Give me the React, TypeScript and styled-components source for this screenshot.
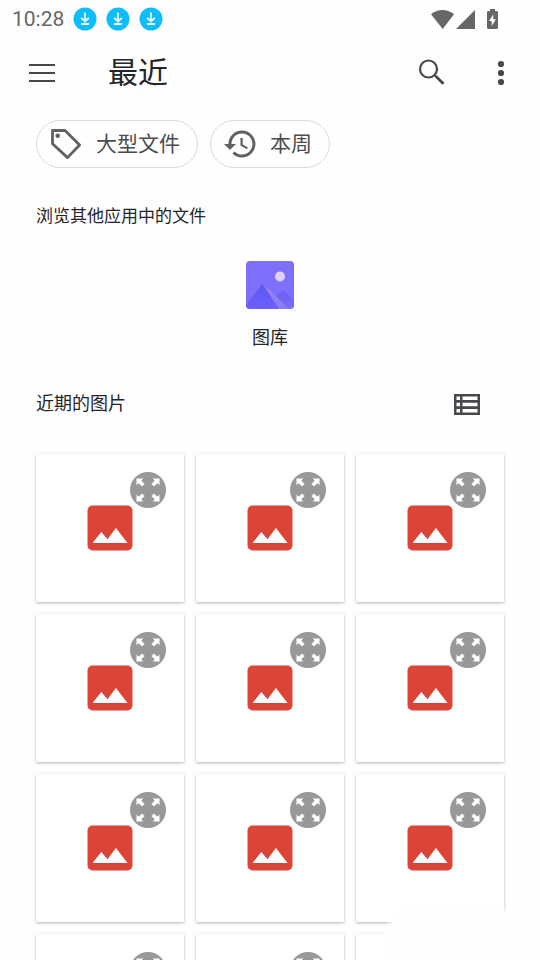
import React from "react";
import styled, { createGlobalStyle } from "styled-components";

const GlobalStyle = createGlobalStyle`
  *, *::before, *::after { box-sizing: border-box; }
  html, body { margin: 0; background: #fefefe; }
  body {
    font-family: Roboto, "Noto Sans CJK SC", sans-serif;
    color: #242528;
  }
  button { font: inherit; color: inherit; border: 0; padding: 0; background: none; cursor: pointer; }
  h1, h2, p { margin: 0; font-weight: 400; }
  svg { display: block; flex: none; }
`;

const Screen = styled.div`
  position: relative;
  height: 100vh;
  overflow: hidden;
  background: #fefefe;
`;

const StatusBar = styled.div`
  display: flex;
  align-items: center;
  height: 37px;
  padding: 0 41px 0 12px;
  color: #666666;
`;

const Clock = styled.time`
  font-size: 21px;
  line-height: 24px;
  margin-right: 9px;
`;

const Notifications = styled.div`
  display: flex;
  gap: 9px;
`;

const SystemIcons = styled.div`
  display: flex;
  align-items: center;
  margin-left: auto;
`;

const AppBar = styled.header`
  display: flex;
  align-items: center;
  height: 71px;
  padding: 0 15px 0 18px;
  color: #46484c;
`;

const IconButton = styled.button`
  display: grid;
  place-items: center;
  width: 48px;
  height: 48px;
`;

const Title = styled.h1`
  flex: 1;
  margin-left: 42px;
  font-size: 30px;
  line-height: 44px;
  color: #242528;
`;

const BarActions = styled.div`
  display: flex;
  gap: 21px;
`;

const Chips = styled.div`
  display: flex;
  gap: 12px;
  padding: 12px 36px 0;
`;

const Chip = styled.button`
  && {
    display: flex;
    align-items: center;
    gap: 15px;
    height: 48px;
    padding: 0 17px 0 14px;
    border: 1px solid #dadada;
    border-radius: 24px;
    font-size: 21px;
    line-height: 30px;
    color: #4a4c50;
  }
  svg { color: #5f6165; overflow: visible; }
`;

const SectionTitle = styled.h2<{ $size: number }>`
  font-size: ${(p) => p.$size}px;
  line-height: 24px;
`;

const AppsSection = styled.section`
  padding: 36px 36px 0;
`;

const AppList = styled.div`
  display: flex;
  justify-content: center;
  padding-top: 33px;
`;

const AppLink = styled.button`
  display: flex;
  flex-direction: column;
  align-items: center;
  gap: 17px;
  font-size: 18px;
  line-height: 24px;
`;

const RecentSection = styled.section`
  padding: 30px 36px 0;
`;

const SectionHeader = styled.div`
  display: flex;
  align-items: center;
  justify-content: space-between;
  height: 48px;
  padding-right: 13px;
`;

const ViewButton = styled(IconButton)`
  && { color: #46484c; }
`;

const Grid = styled.div`
  display: grid;
  grid-template-columns: repeat(3, 1fr);
  gap: 12px;
  padding-top: 26px;
`;

const Card = styled.article`
  position: relative;
  display: grid;
  place-items: center;
  aspect-ratio: 1;
  background: #ffffff;
  border-radius: 1px;
  box-shadow: 0 1px 3px rgba(0, 0, 0, 0.3);
`;

const ExpandButton = styled.button`
  && {
    position: absolute;
    top: 18px;
    right: 18px;
    display: grid;
    place-items: center;
    width: 36px;
    height: 36px;
    border-radius: 50%;
    background: #989898;
    color: #ffffff;
  }
`;

const CornerFade = styled.div`
  position: absolute;
  right: 20px;
  bottom: -12px;
  width: 130px;
  height: 58px;
  border-radius: 20px 0 0 0;
  background: #fefefe;
  box-shadow: 0 0 6px 3px #fefefe;
`;

const DownloadIcon = () => (
  <svg width="24" height="24" viewBox="0 0 24 24" aria-hidden="true">
    <circle cx="12" cy="12" r="11.5" fill="#10bdfc" />
    <path d="M12 5.5v8.5M8.2 10.8l3.8 3.6 3.8-3.6M8 17h8" fill="none" stroke="#e9faff" strokeWidth="1.8" />
  </svg>
);

const StatusIcons = () => (
  <svg width="68" height="20" viewBox="0 0 68 20" fill="currentColor" aria-hidden="true">
    <path d="M0 5.2Q11.5-3.2 23 5.2L11.7 20z" />
    <path d="M25 20L44 1v19z" />
    <path fillRule="evenodd" d="M59 0h5v2h1.6c.8 0 1.4.6 1.4 1.4v15.2c0 .8-.6 1.4-1.4 1.4h-8.2c-.8 0-1.4-.6-1.4-1.4V3.4c0-.8.6-1.4 1.4-1.4H59zM62.3 5.500l-4.300 6.500h2.700v5l4.200-6.800h-2.600z" />
  </svg>
);

const MenuIcon = () => (
  <svg width="28" height="20" viewBox="0 0 28 20" aria-hidden="true">
    <path d="M1 2h26M1 10h26M1 18h26" stroke="currentColor" strokeWidth="2.200" />
  </svg>
);

const SearchIcon = () => (
  <svg width="28" height="28" viewBox="0 0 28 28" fill="none" stroke="currentColor" aria-hidden="true">
    <circle cx="10.500" cy="10" r="8.500" strokeWidth="2.200" />
    <path d="M16.500 16l2 2" strokeWidth="2" />
    <path d="M18 17.500l7.500 7.300" strokeWidth="2.800" />
  </svg>
);

const MoreIcon = () => (
  <svg width="8" height="26" viewBox="0 0 8 26" fill="currentColor" aria-hidden="true">
    <circle cx="4" cy="4" r="3.100" />
    <circle cx="4" cy="13" r="3.100" />
    <circle cx="4" cy="22" r="3.100" />
  </svg>
);

const TagIcon = () => (
  <svg width="30" height="30" viewBox="0 0 30 30" aria-hidden="true">
    <path d="M1.500 1.500H14L28.600 16 16.500 28.600 1.500 14.800z" fill="none" stroke="currentColor" strokeWidth="2.800" strokeLinejoin="round" />
    <circle cx="6.700" cy="6.700" r="2.300" fill="currentColor" />
  </svg>
);

const HistoryIcon = () => (
  <svg width="30" height="30" viewBox="1.700 2 20 20" fill="currentColor" aria-hidden="true">
    <path d="M13 3c-4.970 0-9 4.030-9 9H1l3.890 3.890.07.14L9 12H6c0-3.870 3.130-7 7-7s7 3.130 7 7-3.130 7-7 7c-1.930 0-3.680-.79-4.940-2.060l-1.420 1.420C8.270 19.990 10.510 21 13 21c4.970 0 9-4.030 9-9s-4.030-9-9-9zm-1 5v5l4.280 2.540.72-1.210-3.500-2.080V8H12z" />
  </svg>
);

const GalleryIcon = () => (
  <svg width="48" height="48" viewBox="0 0 48 48" aria-hidden="true">
    <defs>
      <clipPath id="gallery-shape">
        <rect width="48" height="48" rx="4" />
      </clipPath>
      <linearGradient id="gallery-peak" x1="0" y1="0" x2="0" y2="1">
        <stop offset="0" stopColor="#5e58ee" />
        <stop offset="1" stopColor="#6c60ff" />
      </linearGradient>
      <linearGradient id="gallery-side" x1="0" y1="0" x2="1" y2="1">
        <stop offset="0" stopColor="#a58be8" />
        <stop offset="1" stopColor="#8577f8" />
      </linearGradient>
      <linearGradient id="gallery-back" x1="0" y1="0" x2="0" y2="1">
        <stop offset="0" stopColor="#6b5cf1" />
        <stop offset="1" stopColor="#7c6ffc" />
      </linearGradient>
    </defs>
    <g clipPath="url(#gallery-shape)">
      <path d="M0 0h48v48H0z" fill="#7e70fb" />
      <path d="M23 43L36.500 29.500 48 39v9H23z" fill="url(#gallery-back)" />
      <path d="M16.500 22.500L43 48H30z" fill="url(#gallery-side)" />
      <path d="M0 44L16.500 22.500 33 48H0z" fill="url(#gallery-peak)" />
      <circle cx="34" cy="15.500" r="5" fill="#dcd2fb" />
    </g>
  </svg>
);

const ListIcon = () => (
  <svg width="26" height="21" viewBox="0 0 26 21" fill="currentColor" aria-hidden="true">
    <path fillRule="evenodd" d="M0 0h26v21H0zM2.500 2.500v3.500h3.500V2.500zM8.500 2.500v3.500H23.500V2.500zM2.500 8.700v3.600h3.500V8.700zM8.500 8.700v3.600H23.500V8.700zM2.500 15v3.500h3.500v-3.500zM8.500 15v3.500H23.500v-3.500z" />
  </svg>
);

const ImageIcon = () => (
  <svg width="46" height="46" viewBox="0 0 46 46" aria-hidden="true">
    <rect x="0.500" y="0.500" width="45" height="45" rx="5" fill="#db4437" />
    <path d="M5.500 38L14.300 27l6.200 7.300L29 23l11.500 15z" fill="#ffffff" />
  </svg>
);

const ExpandIcon = () => (
  <svg width="24" height="24" viewBox="0 0 24 24" fill="currentColor" aria-hidden="true">
    {[0, 90, 180, 270].map((angle) => (
      <path key={angle} transform={`rotate(${angle} 12 12)`} d="M.5.5h6.800L5.200 2.600 8.600 6 6 8.600 2.600 5.200.5 7.300z" />
    ))}
  </svg>
);

const images = Array.from({ length: 12 }, (_, i) => i + 1);

export default function App() {
  return (
    <Screen>
      <GlobalStyle />
      <StatusBar>
        <Clock>10:28</Clock>
        <Notifications>
          <DownloadIcon />
          <DownloadIcon />
          <DownloadIcon />
        </Notifications>
        <SystemIcons>
          <StatusIcons />
        </SystemIcons>
      </StatusBar>
      <AppBar>
        <IconButton aria-label="菜单"><MenuIcon /></IconButton>
        <Title>最近</Title>
        <BarActions>
          <IconButton aria-label="搜索"><SearchIcon /></IconButton>
          <IconButton aria-label="更多选项"><MoreIcon /></IconButton>
        </BarActions>
      </AppBar>
      <main>
        <Chips>
          <Chip><TagIcon />大型文件</Chip>
          <Chip><HistoryIcon />本周</Chip>
        </Chips>
        <AppsSection>
          <SectionTitle $size={17}>浏览其他应用中的文件</SectionTitle>
          <AppList>
            <AppLink><GalleryIcon />图库</AppLink>
          </AppList>
        </AppsSection>
        <RecentSection>
          <SectionHeader>
            <SectionTitle $size={18}>近期的图片</SectionTitle>
            <ViewButton aria-label="列表视图"><ListIcon /></ViewButton>
          </SectionHeader>
          <Grid>
            {images.map((id) => (
              <Card key={id}>
                <ImageIcon />
                <ExpandButton aria-label="预览"><ExpandIcon /></ExpandButton>
              </Card>
            ))}
          </Grid>
        </RecentSection>
      </main>
      <CornerFade />
    </Screen>
  );
}
